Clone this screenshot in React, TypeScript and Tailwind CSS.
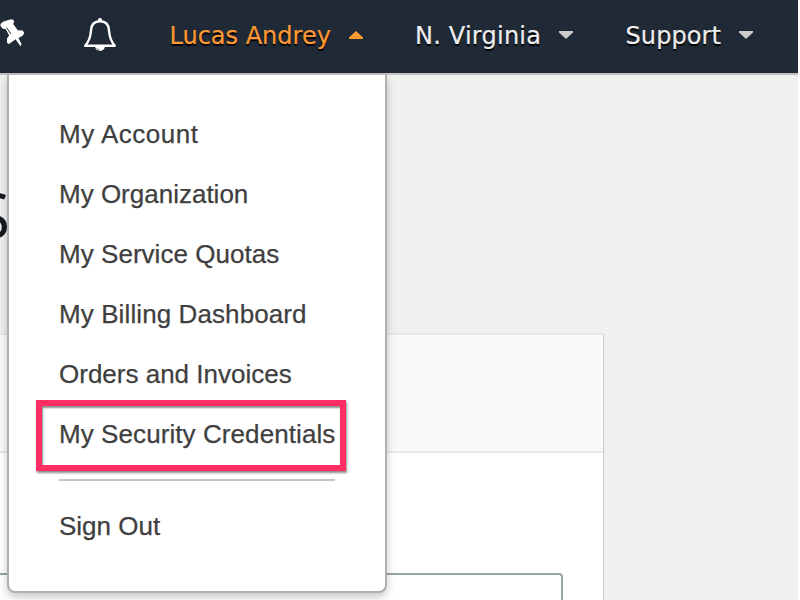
import React from "react";

const MenuItem = ({ label, className }: { label: string; className: string }) => (
  <a className={`block h-[60px] leading-[60px] whitespace-nowrap ${className}`}>
    {label}
  </a>
);

const Caret = ({ up, className }: { up?: boolean; className: string }) => (
  <svg width="14" height="8" viewBox="0 0 14 8" className={`shrink-0 ${className}`}>
    {up ? (
      <path d="M7 0 14 6.5V8H0V6.5Z" fill="#ff9933" />
    ) : (
      <path d="M0 0H14V1.5L7 8 0 1.5Z" fill="#cccccc" />
    )}
  </svg>
);

const NavBar = () => (
  <header className="flex h-[75px] w-[798px] shrink-0 items-center border-b-2 border-[#c0c0c0] bg-[#202a37] font-['DejaVu_Sans',sans-serif] text-[24px] text-[#eeeeee] [text-shadow:0_2px_1px_#000] [-webkit-text-stroke:0.2px]">
    <svg width="25" height="28" viewBox="0 0 25 28" className="-mt-[7px] shrink-0">
      <path
        d="M0.5 5 3 2.8 10 0.5 13 0.5 14.2 2.5 13.2 5 17.8 11.2 22.5 11.5 24.2 13.5 23 16.5 18.5 19 21.5 25 20.5 27.3 15.5 20.3 9 25 7 23.8 7 19.5 9.2 16.5 5.8 10.3 2.5 9.5 0.5 7Z"
        fill="#fff"
      />
      <path d="M6.5 8.5 10.8 15" stroke="#202a37" strokeWidth="1" />
    </svg>
    <svg width="34" height="36" viewBox="0 0 34 36" className="ml-[58px] -mt-[4px] shrink-0">
      <circle cx="17" cy="3" r="2" fill="#fff" />
      <path
        d="M2.2 28.7C6 24.5 7.5 21 8 13.5C8.3 7.5 11 4.3 17 4.3S25.7 7.5 26 13.5C26.5 21 28 24.5 31.8 28.7Z"
        fill="none"
        stroke="#fff"
        strokeWidth="2.4"
        strokeLinejoin="round"
      />
      <path d="M12 29H22A5 5 0 0 1 12 29Z" fill="#fff" />
      <path d="M13.8 31A4 4 0 0 0 17 33.4" fill="none" stroke="#202a37" strokeWidth="0.6" />
    </svg>
    <div className="ml-[52px] flex w-[246px] items-center text-[#ff9933]">
      <span className="w-[162px] pb-[2px] pl-[0.5px] whitespace-nowrap">Lucas Andrey</span>
      <Caret up className="-mt-[3px] ml-[18px]" />
    </div>
    <div className="flex w-[210px] items-center">
      <span className="w-[126px] pb-[2px] tracking-[0.22px] whitespace-nowrap">N. Virginia</span>
      <Caret className="-mt-[3px] ml-[18px]" />
    </div>
    <div className="flex items-center">
      <span className="w-[96px] pb-[2px] pl-[0.5px] tracking-[0.1px] whitespace-nowrap">Support</span>
      <Caret className="-mt-[3px] ml-[18px]" />
    </div>
  </header>
);

const AccountMenu = () => (
  <nav className="absolute top-[75px] left-[7px] flex h-[518px] w-[380px] flex-col rounded-b-lg border-2 border-t-0 border-[#b0b0b0] bg-white px-[50px] pt-[29px] font-['Liberation_Sans',sans-serif] text-[26px] text-[#3f3f3f] shadow-[0_4px_8px_rgba(0,0,0,0.22)] [-webkit-text-stroke:0.25px]">
    <MenuItem label="My Account" className="tracking-[0.5px]" />
    <MenuItem label="My Organization" className="" />
    <MenuItem label="My Service Quotas" className="tracking-[0.04px]" />
    <MenuItem label="My Billing Dashboard" className="tracking-[0.1px]" />
    <MenuItem label="Orders and Invoices" className="" />
    <MenuItem label="My Security Credentials" className="tracking-[0.08px]" />
    <div className="mt-[15px] mb-[15px] h-[2px] shrink-0 bg-[#c4c4c4]" />
    <MenuItem label="Sign Out" className="" />
    <div className="absolute top-[325px] left-[27px] h-[71px] w-[310px] border-[6px] border-[#ff2d64] shadow-[1px_2px_2px_rgba(0,0,0,0.45),inset_1px_2px_2px_rgba(0,0,0,0.45)]" />
  </nav>
);

const App = () => {
  return (
    <div className="relative flex h-[600px] w-[800px] flex-col overflow-hidden bg-white">
      <NavBar />
      <main className="flex w-[798px] grow flex-col bg-[#eff1f1]">
        <div className="h-[258px] shrink-0 overflow-hidden pt-[101px]">
          <h1 className="-ml-[25px] font-['Open_Sans',sans-serif] text-[64px] leading-[78px] font-medium text-[#16191f]">
            S
          </h1>
        </div>
        <section className="flex w-[604px] grow flex-col border-t-2 border-r border-t-[#e5e8e8] border-r-[#c8cbcb] bg-white">
          <div className="h-[118px] shrink-0 border-b-2 border-[#e5eaea] bg-[#f9f9f9]" />
          <div className="mt-[120px] h-[60px] w-[563px] shrink-0 rounded-tr border-t-2 border-r-2 border-[#95a5a6]" />
        </section>
      </main>
      <AccountMenu />
    </div>
  );
};

export default App;
